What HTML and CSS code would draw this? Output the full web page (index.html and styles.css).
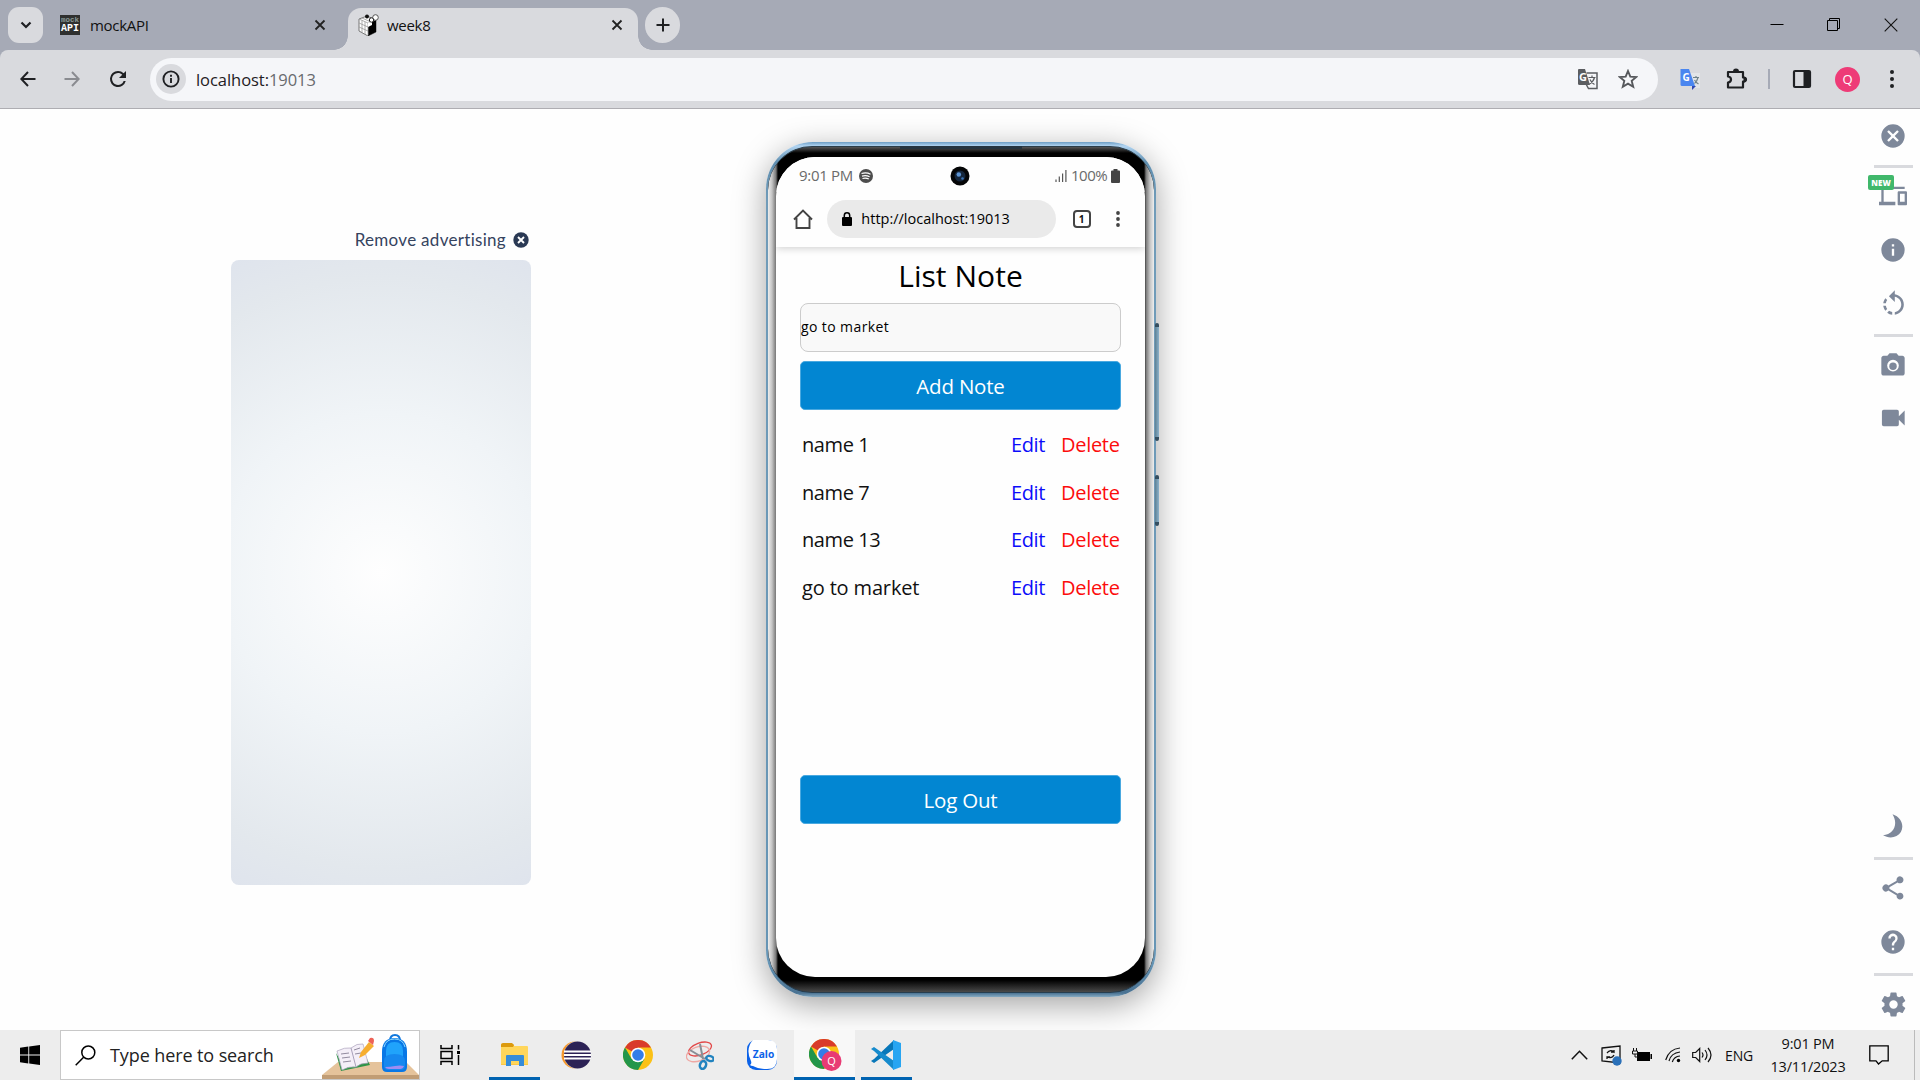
FILE: index.html
```html
<!DOCTYPE html>
<html lang="en">
<head>
<meta charset="utf-8">
<title>week8</title>
<link rel="stylesheet" href="styles.css">
</head>
<body>
<header class="tabs">
  <div class="tab-search"><svg width="12" height="8" viewBox="0 0 12 8"><path d="M1.500 1.500L6 6l4.500-4.500" fill="none" stroke="#1f2023" stroke-width="2.200"/></svg></div>
  <div class="tab">
    <div class="mock-icon"><span>mock</span><b>API</b></div>
    <span class="tab-title t-mock">mockAPI</span>
    <svg class="tab-close" width="12" height="12" viewBox="0 0 12 12"><path d="M1.500 1.500l9 9m0-9l-9 9" stroke="#222" stroke-width="1.800"/></svg>
  </div>
  <div class="tab active">
    <svg class="cube-icon" width="21" height="22" viewBox="0 0 21 22"><path d="M1 5l8-3 9 4v12l-8 4-9-5z" fill="#fff" stroke="#777"/><path d="M10 9l8-3v12l-8 4z" fill="#000"/><path d="M1 5l9 4 0 12M1 9l9 4M1 13l9 4M4 6.500v12M7 8v12M4 4l9 4" stroke="#999" fill="none" stroke-width=".8"/><path d="M10 9l4-2v4l-4 2z" fill="#fff"/><circle cx="17.500" cy="3.500" r="2.800" fill="#fff" stroke="#555"/><circle cx="9" cy="2.500" r="2" fill="#111"/><circle cx="13.500" cy="6" r="2.200" fill="#fff" stroke="#222"/></svg>
    <span class="tab-title t-week">week8</span>
    <svg class="tab-close" width="12" height="12" viewBox="0 0 12 12"><path d="M1.500 1.500l9 9m0-9l-9 9" stroke="#222" stroke-width="1.800"/></svg>
  </div>
  <div class="new-tab"><svg width="14" height="14" viewBox="0 0 14 14"><path d="M7 0.500v13M.5 7h13" stroke="#1f2023" stroke-width="2"/></svg></div>
  <div class="window-buttons">
    <svg width="14" height="14" viewBox="0 0 14 14"><path d="M.5 6.500h13" stroke="#000"/></svg>
    <svg width="14" height="14" viewBox="0 0 14 14"><path d="M.5 2.500h10v10H.5zM2.500 2.500V.5h10v10h-2" stroke="#000" fill="none"/></svg>
    <svg width="14" height="14" viewBox="0 0 14 14"><path d="M.7.7l12.600 12.600m0-12.600L.7 13.300" stroke="#111" stroke-width="1.100"/></svg>
  </div>
</header>

<nav class="toolbar">
  <svg class="back" width="16" height="16" viewBox="0 0 16 16"><path d="M15.500 8H1.500M8 1L1.300 8 8 15" fill="none" stroke="#1f2023" stroke-width="2"/></svg>
  <svg class="forward" width="16" height="16" viewBox="0 0 16 16"><path d="M.5 8h14M8 1l6.700 7L8 15" fill="none" stroke="#8a8b90" stroke-width="2"/></svg>
  <svg class="reload" width="24" height="24" viewBox="0 0 24 24"><path d="M17.650 6.350A7.960 7.960 0 0 0 12 4a8 8 0 1 0 7.730 10h-2.080A6 6 0 1 1 12 6c1.660 0 3.140.69 4.220 1.780L13 11h7V4z" fill="#1f2023"/></svg>
  <div class="omnibox">
    <div class="site-info"><svg width="18" height="18" viewBox="0 0 18 18"><circle cx="9" cy="9" r="7.600" fill="none" stroke="#1f2023" stroke-width="1.900"/><path d="M9 8v5M9 4.800v2" stroke="#1f2023" stroke-width="1.900"/></svg></div>
    <span class="address">localhost:<i>19013</i></span>
    <svg class="translate" width="22" height="22" viewBox="0 0 22 22"><path d="M9.500 5H20v15.500H11.500L9 16" fill="none" stroke="#5b5d61" stroke-width="1.500"/><path d="M1.500 1H8l5 16H2.500Q1 17 1 15.500V1.500z" fill="#5b5d61"/><text x="2" y="13" font-size="11" class="g">G</text><path d="M11.500 9.500h7M15 7.500v2M17.500 9.500q-1 4-5 6.500M13 11.500q1.500 3.500 4.500 5" stroke="#5b5d61" fill="none" stroke-width="1.200"/></svg>
    <svg class="star" width="20" height="20" viewBox="0 0 20 20"><path d="M10 2l2.300 5.600 6 .4-4.600 3.900 1.500 5.900L10 14.600l-5.200 3.200 1.500-5.900L1.700 8l6-.4z" fill="none" stroke="#56585c" stroke-width="1.900"/></svg>
  </div>
  <svg class="gtranslate" width="21" height="22" viewBox="0 0 21 22"><path d="M8 5h12v15H12z" fill="#e3e5e8"/><path d="M12 18h4l-4 4z" fill="#3049b0"/><path d="M1 1h8l6 17H2Q.5 18 .5 16.500V1.500z" fill="#4a86f0"/><text x="2.500" y="13" font-size="10" class="g">G</text><path d="M13 9.500h6M16 8v1.500M18 9.500q-1 4-3.500 6M14.500 12q1.500 2.500 4 4" stroke="#70838a" fill="none" stroke-width="1.200"/></svg>
  <svg class="puzzle" width="22" height="22" viewBox="0 0 22 22"><path d="M2 4h15v5.500q3 0 3 2t-3 2V19.500H2v-5q3-.4 3-3t-3-3z" fill="none" stroke="#1f2023" stroke-width="2.200" stroke-linejoin="round"/><path d="M7 3.500a3 3 0 0 1 6 0zM17.500 8.500a3 3 0 0 1 0 6z" fill="#1f2023"/></svg>
  <span class="divider"></span>
  <svg class="panel" width="20" height="20" viewBox="0 0 20 20"><rect x="2" y="2" width="16" height="16" rx="1" fill="none" stroke="#1f2023" stroke-width="2.200"/><path d="M11.500 2H18v16h-6.500z" fill="#1f2023"/></svg>
  <span class="avatar">Q</span>
  <svg class="menu" width="4" height="18" viewBox="0 0 4 18"><g fill="#1f2023"><circle cx="2" cy="2" r="2"/><circle cx="2" cy="9" r="2"/><circle cx="2" cy="16" r="2"/></g></svg>
</nav>

<main class="stage">
  <section class="ad">
    <div class="ad-head"><span>Remove advertising</span><svg width="16" height="16" viewBox="0 0 16 16"><circle cx="8" cy="8" r="7.700" fill="#2a3954"/><path d="M5 5l6 6m0-6l-6 6" stroke="#fff" stroke-width="1.900"/></svg></div>
    <div class="ad-box"></div>
  </section>

  <section class="phone">
    <span class="side-key volume"></span><span class="side-key power"></span><span class="speaker"></span>
    <div class="bezel">
    <div class="screen">
      <div class="status">
        <span class="clock">9:01 PM</span>
        <svg class="spot" width="14" height="14" viewBox="0 0 14 14"><circle cx="7" cy="7" r="7" fill="#4d4d4d"/><path d="M2.500 4.500q5-1.500 9 .7M3 7.100q4-1.200 7.600.6M3.500 9.500q3.500-1 6.300.6" stroke="#fff" stroke-width="1.200" fill="none"/></svg>
        <svg class="camera" width="20" height="20" viewBox="0 0 20 20"><circle cx="10" cy="10" r="9.500" fill="#040506"/><circle cx="10" cy="10" r="5.500" fill="#14253a"/><circle cx="8.800" cy="8.500" r="2.300" fill="#5c93d3"/><circle cx="12.500" cy="12.500" r="1.300" fill="#3c73b5"/></svg>
        <svg class="signal" width="12" height="12" viewBox="0 0 12 12"><path d="M1 9.500V12M4.300 6.500V12M7.600 3.500V12M10.900 0V12" stroke="#555" stroke-width="1.200"/></svg>
        <span class="percent">100%</span>
        <svg class="battery" width="9" height="14" viewBox="0 0 9 14"><path d="M2.500 0h4v1.500H8q1 0 1 1V13q0 1-1 1H1q-1 0-1-1V2.500q0-1 1-1h1.500z" fill="#444"/></svg>
      </div>
      <div class="mobile-bar">
        <svg width="20" height="20" viewBox="0 0 20 20"><path d="M1 10.500L10 1.500l9 9M3.500 9v10h13V9" fill="none" stroke="#444" stroke-width="1.900"/></svg>
        <div class="mobile-url"><svg width="10" height="14" viewBox="0 0 10 14"><path d="M2.300 6V3.500a2.700 2.700 0 0 1 5.400 0V6" fill="none" stroke="#000" stroke-width="1.500"/><rect y="5" width="10" height="9" rx="1" fill="#000"/></svg><span>http://localhost:19013</span></div>
        <span class="count">1</span>
        <svg width="4" height="16" viewBox="0 0 4 16"><g fill="#444"><circle cx="2" cy="2" r="1.900"/><circle cx="2" cy="8" r="1.900"/><circle cx="2" cy="14" r="1.900"/></g></svg>
      </div>
      <div class="app">
        <h1>List Note</h1>
        <div class="input">go to market</div>
        <div class="button add">Add Note</div>
        <ul>
          <li><span>name 1</span><a class="edit">Edit</a><a class="delete">Delete</a></li>
          <li><span>name 7</span><a class="edit">Edit</a><a class="delete">Delete</a></li>
          <li><span>name 13</span><a class="edit">Edit</a><a class="delete">Delete</a></li>
          <li><span class="long">go to market</span><a class="edit">Edit</a><a class="delete">Delete</a></li>
        </ul>
        <div class="button logout">Log Out</div>
      </div>
    </div>
    </div>
  </section>

  <aside class="rail">
    <div class="cell close"><svg viewBox="0 0 24 24" width="28" height="28"><path d="M12 2a10 10 0 1 0 0 20 10 10 0 0 0 0-20zm5 13.590L15.590 17 12 13.410 8.410 17 7 15.590 10.590 12 7 8.410 8.410 7 12 10.590 15.590 7 17 8.410 13.410 12z"/></svg></div>
    <hr>
    <div class="cell devices"><svg viewBox="0 0 24 24" width="28" height="28"><path d="M4 6h18V4H4c-1.100 0-2 .9-2 2v11H0v3h14v-3H4zm19 2h-6c-.55 0-1 .45-1 1v10c0 .55.45 1 1 1h6c.55 0 1-.45 1-1V9c0-.55-.45-1-1-1zm-1 9h-4v-7h4z"/></svg><span class="new">NEW</span></div>
    <div class="cell info"><svg viewBox="0 0 24 24" width="28" height="28"><path d="M12 2a10 10 0 1 0 0 20 10 10 0 0 0 0-20zm1 15h-2v-6h2zm0-8h-2V7h2z"/></svg></div>
    <div class="cell rotate"><svg viewBox="0 0 24 24" width="31" height="31"><path d="M7.110 8.530L5.700 7.110C4.800 8.270 4.240 9.610 4.070 11h2.020c.14-.87.49-1.720 1.020-2.470zM6.090 13H4.070c.17 1.390.72 2.730 1.620 3.890l1.410-1.420c-.52-.75-.87-1.590-1.010-2.470zm1.010 5.320c1.160.9 2.510 1.440 3.900 1.610V17.900c-.87-.15-1.710-.49-2.460-1.030zM13 4.070V1L8.450 5.550 13 10V6.090c2.840.48 5 2.940 5 5.910s-2.160 5.430-5 5.910v2.020c3.950-.49 7-3.850 7-7.930s-3.050-7.440-7-7.930z"/></svg></div>
    <hr>
    <div class="cell photo"><svg viewBox="0 0 24 24" width="28" height="28"><circle cx="12" cy="13" r="3.200"/><path d="M9 2L7.170 4H4c-1.100 0-2 .9-2 2v13c0 1.100.9 2 2 2h16c1.100 0 2-.9 2-2V6c0-1.100-.9-2-2-2h-3.170L15 2zm3 15.500a5 5 0 1 1 0-10 5 5 0 0 1 0 10z"/></svg></div>
    <div class="cell video"><svg viewBox="0 0 24 24" width="28" height="28"><path d="M17 10.500V6.500q0-1.500-1.500-1.500H4Q2.500 5 2.500 6.500v11Q2.500 19 4 19h11.500q1.500 0 1.500-1.500v-4l5 5v-13z"/></svg></div>
    <div class="cell moon"><svg viewBox="0 0 20 24" width="20" height="24"><path d="M9.500 .3C21 4 22.500 17 13.500 22 9 24.300 4 23.500 0 21.300 11 20.500 15.500 10 9.500 .3z"/></svg></div>
    <hr>
    <div class="cell share"><svg viewBox="0 0 24 24" width="28" height="28"><path d="M18 16.080c-.76 0-1.440.3-1.960.77L8.910 12.700a3.300 3.300 0 0 0 0-1.390l7.050-4.110A3 3 0 1 0 15 5c0 .24.04.47.09.7L8.040 9.810a3 3 0 1 0 0 4.380l7.120 4.160A2.920 2.920 0 1 0 18 16.080z"/></svg></div>
    <div class="cell help"><svg viewBox="0 0 24 24" width="28" height="28"><path d="M12 2a10 10 0 1 0 0 20 10 10 0 0 0 0-20zm1 17h-2v-2h2zm2.070-7.750l-.9.920C13.450 12.900 13 13.500 13 15h-2v-.5c0-1.100.45-2.100 1.170-2.830l1.240-1.260A2 2 0 1 0 10 9H8a4 4 0 1 1 7.070 2.250z"/></svg></div>
    <hr>
    <div class="cell gear"><svg viewBox="0 0 24 24" width="29" height="29"><path d="M19.430 12.980c.04-.32.070-.64.070-.98s-.03-.66-.07-.98l2.110-1.650a.5.5 0 0 0 .12-.64l-2-3.460a.5.5 0 0 0-.61-.22l-2.490 1c-.52-.4-1.080-.73-1.690-.98l-.38-2.650A.49.49 0 0 0 14 2h-4a.49.49 0 0 0-.49.420l-.38 2.650c-.61.250-1.170.590-1.690.98l-2.490-1a.49.49 0 0 0-.61.220l-2 3.460a.49.49 0 0 0 .12.640l2.110 1.650c-.04.320-.07.650-.07.980s.03.660.07.980l-2.110 1.650a.5.5 0 0 0-.12.640l2 3.460c.12.220.39.300.61.220l2.490-1c.52.400 1.080.730 1.690.98l.38 2.650c.03.240.24.420.49.420h4c.25 0 .46-.18.490-.42l.38-2.650c.61-.25 1.170-.59 1.690-.98l2.490 1c.23.090.49 0 .61-.22l2-3.460a.5.5 0 0 0-.12-.64zM12 15.500a3.500 3.500 0 1 1 0-7 3.500 3.500 0 0 1 0 7z"/></svg></div>
  </aside>
</main>

<footer class="taskbar">
  <div class="start"><svg width="20" height="20" viewBox="0 0 20 20"><path d="M0 2.800l8.300-1.200v7.900H0zM9.200 1.500L20 0v9.500H9.200zM0 10.400h8.300v8L0 17.200zM9.200 10.400H20V20L9.200 18.500z"/></svg></div>
  <div class="search">
    <svg width="21" height="21" viewBox="0 0 21 21"><circle cx="13.300" cy="7.500" r="6.500" fill="none" stroke="#000" stroke-width="1.500"/><path d="M8.600 12.200L.7 20.200" stroke="#000" stroke-width="1.500"/></svg>
    <span>Type here to search</span>
    <svg class="school" width="97" height="47" viewBox="0 0 97 47">
      <path d="M16 30h68l13 13H0z" fill="#e5c39b"/><path d="M0 43h98v4H0z" fill="#c19d75"/>
      <path d="M14 21l5 18 29-6-3-6-24 6z" fill="#2f9448"/><path d="M15 19q8-4 14-3 6-5 12-4l5 19q-8 0-12 4-7-1-14 3z" fill="#f4eff8" stroke="#ada5bd" stroke-width=".7"/><path d="M29 16l5 19" stroke="#a9a1ba"/><path d="M19 22l8-1M20 26l8-1M21 30l8-1M32 18l6-2M33 22l6-1" stroke="#928b9f"/>
      <path d="M37 26l2-6 8-10 5 4-9 9z" fill="#f6ae31"/><path d="M46 9l2-3q4-1 4 3l-1 4z" fill="#ee6257"/>
      <path d="M68 9q0-6 5-6t5 6" fill="none" stroke="#1178dd" stroke-width="2"/><path d="M60 20Q60 6 72.500 6T85 20V35q0 5-5 5H65q-5 0-5-5z" fill="#0877e6"/><path d="M64 19q0-9 8.500-9T81 19v6H64z" fill="#20a3fb"/><path d="M62 29q0-7 10.500-7T83 29v5q0 4-4 4H66q-4 0-4-4z" fill="#1688ef"/><path d="M63 35q5 0 10-1t9 0q-1 3-4 3H67q-3 0-4-2z" fill="#a08cf2"/><path d="M62 15q2-8 10.500-8T83 15" stroke="#8edbff" fill="none"/>
    </svg>
  </div>
  <div class="app-slot taskview"><svg width="21" height="20" viewBox="0 0 21 20"><path d="M1 0v3.500h11V0M1 20v-3.500h11V20M1 6.500h11v7H1zM18.500 0v4.500M18.500 10v10" fill="none" stroke="#000" stroke-width="1.500"/><path d="M17 6h3v3h-3z"/></svg></div>
  <div class="app-slot run explorer"><svg width="28" height="24" viewBox="0 0 28 24"><path d="M0 2q0-1 1-1h11l2 3h12q1 0 1 1v17H0z" fill="#fdc846"/><path d="M0 2q0-2 2-2h9l2 2-1 2H0z" fill="#dc9a0e"/><path d="M0 4h12l2-1h12q1 0 1 1v17H0z" fill="#ffd65b"/><path d="M5 13q0-1 1-1h16q1 0 1 1v10h-5v-5h-8v5H5z" fill="#368cd9"/></svg></div>
  <div class="app-slot"><svg width="31" height="28" viewBox="0 0 31 28"><circle cx="14" cy="14" r="13.500" fill="#f5982d"/><circle cx="17" cy="14" r="14" fill="#ededed"/><circle cx="16.500" cy="14" r="13.500" fill="#2c2255"/><path d="M3 10.500h27M3 14h27M3 17.500h27" stroke="#fff" stroke-width="1.800"/></svg></div>
  <div class="app-slot"><svg width="30" height="30" viewBox="0 0 30 30"><circle cx="15" cy="15" r="15" fill="#fbc116"/><path d="M15 15L2 7.500A15 15 0 0 1 28 7.500H15z" fill="#d93a2b"/><path d="M2 7.500A15 15 0 0 0 15 30l6.500-11.300L8.500 18.800z" fill="#23964a"/><circle cx="15" cy="15" r="7.300" fill="#fff"/><circle cx="15" cy="15" r="5.800" fill="#347de8"/></svg></div>
  <div class="app-slot"><svg width="28" height="29" viewBox="0 0 28 29"><g fill="none" stroke-width="1.300"><ellipse cx="14" cy="8" rx="12" ry="6" transform="rotate(-20 14 8)" stroke="#e24848"/><ellipse cx="12" cy="13" rx="12" ry="7" transform="rotate(-20 12 13)" stroke="#efa8a4"/></g><path d="M14 3l3 15M4 9l15 9" stroke="#888f96" stroke-width="2"/><g fill="none" stroke="#2283bf" stroke-width="2.500"><ellipse cx="24" cy="17.500" rx="3.800" ry="2.500" transform="rotate(15 24 17.500)"/><ellipse cx="17" cy="24" rx="3" ry="4" transform="rotate(20 17 24)"/></g></svg></div>
  <div class="app-slot"><svg width="30" height="30" viewBox="0 0 30 30"><rect width="30" height="30" rx="9" fill="#0b62e8"/><path d="M6 0h15q9 0 9 9v10q0 10-10 10-9 0-14-3-2 0-3-1 2-1 1-4Q-2 9 6 0z" fill="#fff"/><text x="16.500" y="17.500" text-anchor="middle" font-size="10.200" class="zalo">Zalo</text></svg></div>
  <div class="app-slot run current"><svg width="33" height="32" viewBox="0 0 33 32"><circle cx="15" cy="15" r="15" fill="#fbc116"/><path d="M15 15L2 7.500A15 15 0 0 1 28 7.500H15z" fill="#d93a2b"/><path d="M2 7.500A15 15 0 0 0 15 30l6.500-11.300L8.500 18.800z" fill="#23964a"/><circle cx="15" cy="15" r="7.300" fill="#fff"/><circle cx="15" cy="15" r="5.800" fill="#347de8"/><circle cx="22.500" cy="22" r="10" fill="#e83b74"/><text x="22.500" y="26" text-anchor="middle" font-size="11" class="q">Q</text></svg></div>
  <div class="app-slot run code"><svg width="31" height="30" viewBox="0 0 31 30"><path d="M23 0L3 19l-3 2 3 2 20-14z" fill="#0877b9"/><path d="M23 30L3 11 0 9l3-2 20 14z" fill="#168bcd"/><path d="M22 0l8 3v24l-8 3z" fill="#27a5f2"/></svg></div>
  <div class="tray">
    <svg class="up" width="17" height="10" viewBox="0 0 17 10"><path d="M.8 9.300l7.700-8 7.700 8" stroke="#111" fill="none" stroke-width="1.500"/></svg>
    <svg class="sync" width="21" height="21" viewBox="0 0 21 21"><path d="M1 3l18-2v17L1 16z" fill="none" stroke="#111" stroke-width="1.300"/><path d="M6 8q3-4 7-1v-2M13 7h-3M13 10q-2 4-7 2v2M6 12h3" fill="none" stroke="#111" stroke-width="1.300"/><circle cx="16" cy="16" r="4.700" fill="#2a70b9"/></svg>
    <svg class="power-icon" width="20" height="14" viewBox="0 0 20 14"><path d="M5 4h13v9H5zM18.500 6H20v5h-1.500z"/><path d="M1.500 0v3M4.500 0v3M.5 3h5v3h-5zM3 6v3h3" stroke="#111" fill="none"/></svg>
    <svg class="wifi" width="16" height="16" viewBox="0 0 16 16"><path d="M.7 13Q4 2 15 1M4 14Q6 6 15 5M7.300 15Q9 9.500 15 9" stroke="#111" fill="none" stroke-width="1.200"/><circle cx="13.500" cy="13.500" r="1.700"/></svg>
    <svg class="sound" width="21" height="16" viewBox="0 0 21 16"><path d="M.7 5.500h3l4-4v13l-4-4h-3zM10 5.500q2 2.500 0 5M13 3q4 5 0 10M16 1q6 7 0 14" stroke="#111" fill="none" stroke-width="1.200"/></svg>
    <span class="eng">ENG</span>
    <div class="datetime"><span class="time">9:01 PM</span><span class="date">13/11/2023</span></div>
    <svg class="notice" width="20" height="20" viewBox="0 0 20 20"><path d="M.8.8h18.400v15h-6L9.500 19 7 15.800H.8z" fill="none" stroke="#000" stroke-width="1.300"/></svg>
    <span class="edge"></span>
  </div>
</footer>
</body>
</html>
```
FILE: styles.css
```css
* { box-sizing: border-box; }
body { margin: 0; width: 1920px; height: 1080px; overflow: hidden; display: flex; flex-direction: column; background: #fefefe; font-family: "Open Sans", "Noto Sans", sans-serif; color: #111; }
svg { display: block; flex: none; }
span, i { white-space: nowrap; }

.tabs { height: 50px; flex: none; background: #a6aab6; display: flex; align-items: flex-start; padding: 7px 22px 0 8px; position: relative; z-index: 1; }
.tab-search { width: 35px; height: 36px; border-radius: 11px; background: #d9dade; display: grid; place-items: center; }
.tab { height: 36px; width: 305px; display: flex; align-items: center; padding: 0 22px 0 17px; }
.tab.active { width: 290px; height: 43px; margin-top: 1px; padding: 0 15px 9px 10px; background: #d9dade; border-radius: 13px 13px 0 0; position: relative; }
.tab.active::before, .tab.active::after { content: ""; position: absolute; bottom: 1px; width: 14px; height: 14px; }
.tab.active::before { left: -14px; background: radial-gradient(circle at 0 0, transparent 13.500px, #d9dade 14px); }
.tab.active::after { right: -14px; background: radial-gradient(circle at 100% 0, transparent 13.500px, #d9dade 14px); }
.mock-icon { width: 20px; height: 20px; background: #2f302f; color: #fff; font: bold 10px/9px "Liberation Mono", monospace; display: flex; flex-direction: column; align-items: center; padding-top: 1px; }
.mock-icon span { font-size: 7.500px; line-height: 8px; color: #8a9a98; }
.mock-icon b { display: block; }
.tab-title { font-size: 15px; margin-left: 10px; letter-spacing: -.3px; }
.t-week { margin-left: 8px; }
.tab-close { margin-left: auto; }
.new-tab { width: 35px; height: 36px; border-radius: 18px; background: #d9dade; display: grid; place-items: center; margin-left: 7px; }
.window-buttons { margin: 11px 0 0 auto; display: flex; gap: 43px; }

.toolbar { height: 59px; flex: none; background: #d9dade; border-bottom: 1px solid #aeadb2; display: flex; align-items: center; padding: 0 26px 0 20px; border-radius: 8px 8px 0 0; box-shadow: 0 -8px 0 #a6aab6; }
.forward { margin-left: 28px; }
.reload { margin-left: 26px; }
.omnibox { width: 1508px; height: 43px; border-radius: 22px; background: #f5f6f9; margin-left: 20px; display: flex; align-items: center; padding: 0 20px 0 6px; }
.site-info { width: 30px; height: 30px; border-radius: 50%; background: #d9dade; display: grid; place-items: center; }
.address { font-size: 16.500px; margin-left: 10px; letter-spacing: -.05px; color: #1f2023; }
.address i { font-style: normal; color: #686a6e; }
.translate { margin-left: auto; }
.star { margin-left: 19px; }
.g { fill: #fff; font-weight: bold; font-family: "Open Sans", sans-serif; }
.gtranslate { margin-left: 22px; }
.puzzle { margin-left: 25px; }
.divider { width: 2px; height: 20px; background: #a6aab6; margin-left: 20px; }
.panel { margin-left: 22px; }
.avatar { width: 25px; height: 25px; border-radius: 50%; background: #ee3b77; color: #fff; font-size: 13px; display: grid; place-items: center; margin-left: 23px; }
.menu { margin-left: auto; }

.stage { height: 921px; flex: none; display: flex; align-items: flex-start; overflow: hidden; }
.ad { width: 300px; margin: 119px 0 0 231px; }
.ad-head { height: 32px; display: flex; justify-content: flex-end; padding: 0 2px 8px 0; align-items: center; gap: 7px; font-family: Lato, sans-serif; font-size: 17px; color: #35435e; }
.ad-head span { letter-spacing: .3px; line-height: 22px; }
.ad-box { height: 625px; border-radius: 8px; background: radial-gradient(circle farthest-corner at 50% 50%, #fefefe 0, #f0f4f7 46%, #e3e8ed 85%, #dfe4ed 100%); }

.phone { margin: 33px 0 0 235px; width: 390px; height: 855px; border-radius: 47px; padding: 4px 2px 4px; background: linear-gradient(#6c9dc4 0, #b1d4f1 4px, #608eaf 20px, #719cb9 60px, #6695b5 820px, #4a7292 851px, #85aac2); box-shadow: 0 8px 32px rgba(0,0,0,.36); position: relative; }
.side-key { position: absolute; left: 389px; width: 4px; border-radius: 2px; background: linear-gradient(90deg, #5e8194, #8cb2cb); border-top: 4px solid #344e60; border-bottom: 4px solid #344e60; }
.volume { top: 181px; height: 118px; }
.power { top: 333px; height: 51px; }
.speaker { position: absolute; left: 134px; top: 4px; width: 122px; height: 3px; background: #25343f; }
.bezel { height: 847px; border-radius: 44px; padding: 10px 9px 16px 8px; background: linear-gradient(90deg, #eee 0, #c4c4c4 4px, #777 8px, transparent 10px, transparent 376px, #777 378px, #c4c4c4 382px, #eee 386px), linear-gradient(#555 0, #000 6px, #000 833px, #555 847px); border-top: 1px solid #2b3d49; border-bottom: 1px solid #263d4e; }
.screen { height: 820px; border-radius: 39px; overflow: hidden; background: #fefefe; }
.status { height: 35px; display: flex; align-items: center; padding: 3px 24px 0 23px; font-size: 15px; color: #6a6a6a; background: #fefefe; position: relative; z-index: 1; }
.clock, .percent { margin-top: -2px; }
.clock { width: 54px; letter-spacing: -.3px; }
.spot { margin-left: 6px; }
.camera { margin-left: 77px; }
.signal { margin-left: 85px; }
.percent { margin-left: 4px; width: 37px; letter-spacing: -.5px; }
.battery { margin-left: 3px; }
.mobile-bar { height: 55px; display: flex; align-items: center; padding: 0 25px 1px 17px; box-shadow: 0 1px 8px rgba(0,0,0,.2); justify-content: space-between; }
.mobile-url { width: 229px; height: 38px; border-radius: 19px; background: #eaeaea; display: flex; align-items: center; gap: 9px; padding-left: 15px; font-size: 14.500px; color: #000; margin-right: 1px; margin-left: -1px; }
.mobile-url span { margin-top: -2px; }
.count { width: 18px; height: 18px; border: 2px solid #444; border-radius: 4px; font-size: 10px; font-weight: bold; line-height: 14px; text-align: center; margin-right: 10px; }
.app { padding: 9px 24px 0; }
h1 { margin: 0; height: 47px; font: 30px/40px "Open Sans", sans-serif; text-align: center; color: #000; letter-spacing: .05px; }
.input { height: 49px; border: 1px solid #ccc; border-radius: 8px; background: #f9f9f9; font-size: 14px; line-height: 46px; color: #000; letter-spacing: .4px; }
.button { height: 49px; border-radius: 5px; background: #0286d2; border: 1px solid #4aa9e0; color: #fff; font-size: 20.500px; line-height: 49px; text-align: center; letter-spacing: -.2px; }
.add { margin-top: 9px; }
ul { list-style: none; padding: 0 2px; margin: 11px 0 0; height: 354px; }
li { height: 47.600px; display: flex; align-items: center; font-size: 20px; line-height: 47px; letter-spacing: -.4px; }
.long { letter-spacing: -.15px; }
.edit { margin-left: auto; width: 50px; color: #0c0cfa; }
.delete { width: 58px; color: #fc0c0c; letter-spacing: -.3px; }

.rail { width: 54px; height: 921px; margin-left: auto; padding-left: 7px; display: flex; flex-direction: column; align-items: flex-start; }
.rail svg { fill: #7e889a; }
.rail hr { width: 39px; height: 3px; border: 0; margin: 0 0 0 1px; background: #d9dade; flex: none; }
.cell { width: 40px; flex: none; display: grid; place-items: center; }
.close { height: 56px; padding-bottom: 3px; }
.devices { height: 55px; position: relative; }
.new { position: absolute; left: -5px; top: 7px; width: 26px; height: 15px; border-radius: 2px; background: #40b86b; color: #fff; font: 800 8px/15px "Open Sans", sans-serif; text-align: center; }
.info { height: 53px; }
.rotate { height: 58px; padding-bottom: 2px; }
.photo { height: 54px; padding-top: 1px; }
.video { height: 54px; }
.moon { margin-top: auto; height: 63px; }
.share { height: 56px; }
.help { height: 57px; padding-bottom: 5px; }
.gear { height: 54px; padding-top: 2px; }

.taskbar { height: 50px; flex: none; background: #ededed; display: flex; }
.start { width: 60px; display: grid; place-items: center; }
.search { width: 360px; height: 50px; background: #fff; border: 1px solid #c8c8c8; display: flex; align-items: center; padding-left: 14px; font-size: 18px; letter-spacing: -.1px; color: #222; }
.search span { margin-left: 14px; }
.school { margin-left: auto; align-self: flex-end; }
.app-slot { width: 61px; margin-right: 1px; display: grid; place-items: center; padding-right: 1px; }
.taskview { width: 60px; margin-right: 3px; padding-right: 0; }
.run { border-bottom: 3px solid #0063b1; padding-top: 3px; }
.explorer { width: 51px; margin: 0 6px; padding-right: 0; }
.current { background: #f8f8f8; margin-right: 0; padding-right: 0; padding-left: 2px; }
.code { width: 51px; margin-left: 6px; }
.tray { display: flex; align-items: center; margin-left: auto; height: 50px; }
.up { margin-right: 1px; }
.sync { margin-left: 12px; }
.power-icon { margin-left: 10px; }
.wifi { margin-left: 13px; }
.sound { margin-left: 11px; }
.eng { font-size: 14px; margin-left: 12px; width: 29px; letter-spacing: -.1px; }
.datetime { width: 76px; margin-left: 16px; display: flex; flex-direction: column; align-items: center; font-size: 14.500px; line-height: 23px; letter-spacing: -.2px; }
.notice { margin-left: 23px; }
.edge { width: 1px; height: 50px; background: #bbb; margin: 0 5px 0 25px; }
.q { fill: #fff; font-family: "Open Sans", sans-serif; }
.zalo { fill: #0b62e8; font-family: "Open Sans", sans-serif; font-weight: bold; }
```
